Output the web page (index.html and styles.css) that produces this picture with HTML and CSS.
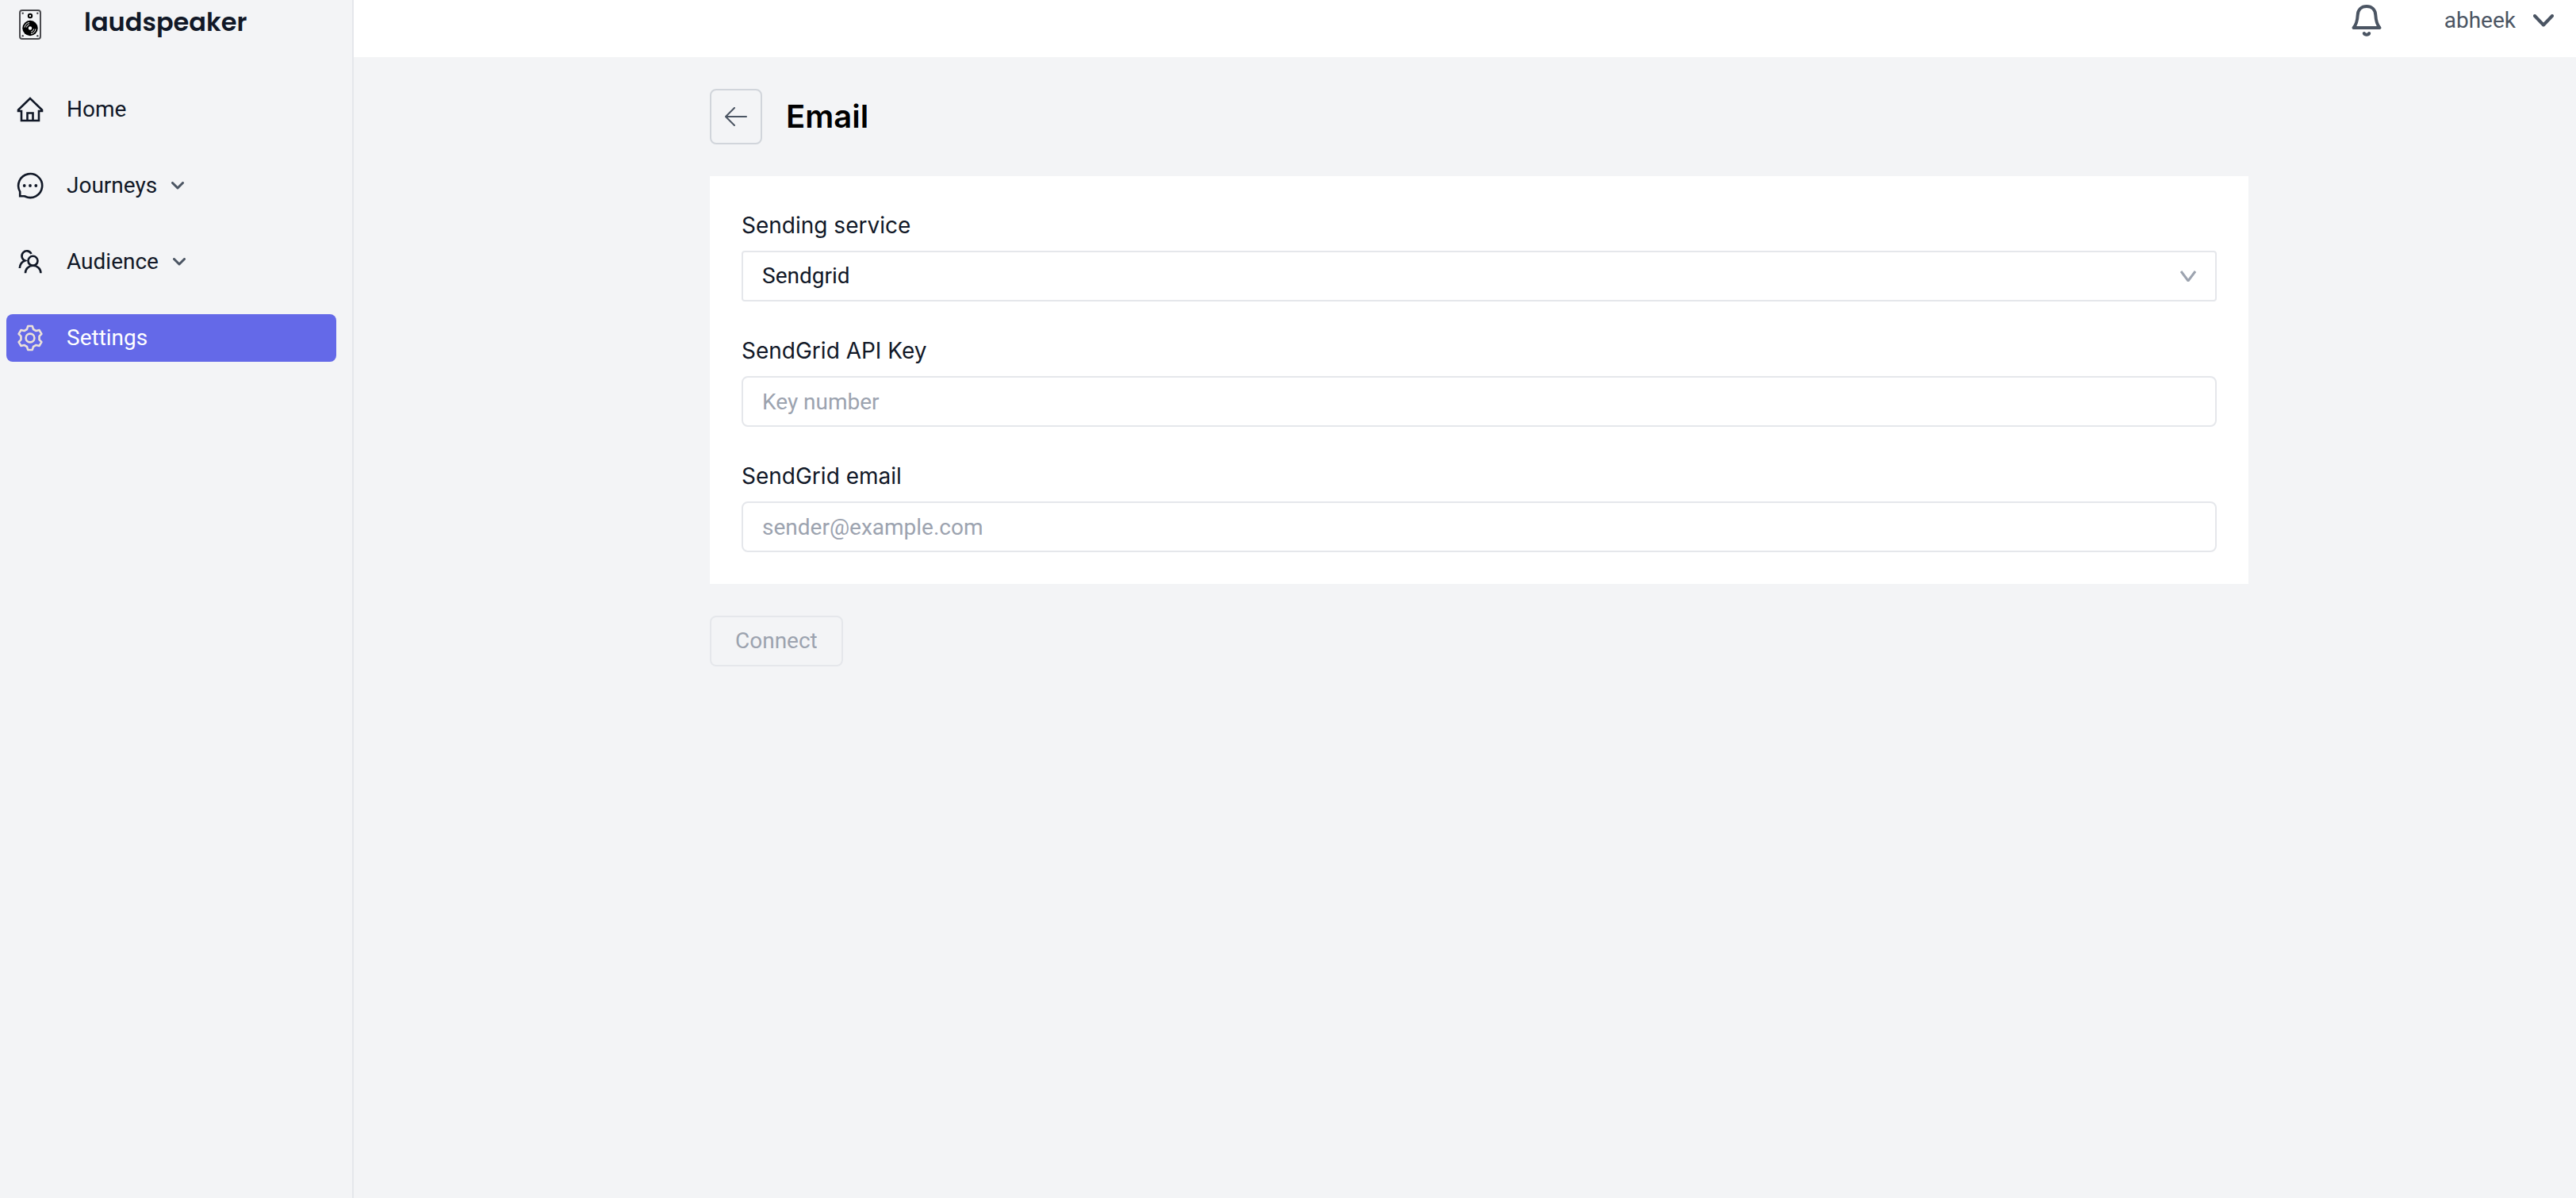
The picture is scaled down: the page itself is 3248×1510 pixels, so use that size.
FILE: index.html
```html
<!DOCTYPE html>
<html lang="en">
<head>
<meta charset="utf-8">
<meta name="viewport" content="width=device-width, initial-scale=1">
<title>Email settings - laudspeaker</title>
<link rel="stylesheet" href="styles.css">
</head>
<body>
<div class="app">
  <aside class="sidebar">
    <div class="brand">
      <svg class="brand-icon" viewBox="0 0 28 38" aria-hidden="true">
        <rect x="1" y="1" width="26" height="36" rx="3" fill="#f3f4f6" stroke="#4a4a4e" stroke-width="2"/>
        <g fill="#4a4a4e"><circle cx="4.700" cy="4.700" r="1.200"/><circle cx="23.300" cy="4.700" r="1.200"/><circle cx="4.700" cy="33.300" r="1.200"/><circle cx="23.300" cy="33.300" r="1.200"/></g>
        <circle cx="14" cy="8" r="2.200" fill="#fff" stroke="#000" stroke-width="2"/>
        <circle cx="14" cy="23.500" r="9.700" fill="#000"/>
        <circle cx="14" cy="23.500" r="2.200" fill="#fff"/>
        <g fill="none" stroke="#fff" stroke-width="1"><path d="M7 22.500a7 7 0 0 1 6-6M9.300 22.500a5 5 0 0 1 3.500-3.800M21 24.500a7 7 0 0 1-6 6M18.700 24.500a5 5 0 0 1-3.500 3.800"/></g>
      </svg>
      <span class="brand-name">laudspeaker</span>
    </div>
    <nav class="nav" aria-label="Main">
      <a class="nav-item" href="#home">
        <svg class="nav-icon" viewBox="0 0 36 36" aria-hidden="true"><path d="M18 4 3 18.500V20h4v12h22V20h4v-1.500ZM14.500 32V22.500h7V32"/></svg>
        <span>Home</span>
      </a>
      <a class="nav-item" href="#journeys">
        <svg class="nav-icon" viewBox="0 0 36 36" aria-hidden="true"><path d="M5.200 31.200V25.600A15 15 0 1 1 11.500 31.500L10.500 31.200Z"/><g fill="currentColor" stroke="none"><circle cx="10.700" cy="18" r="1.900"/><circle cx="18" cy="18" r="1.900"/><circle cx="25.300" cy="18" r="1.900"/></g></svg>
        <span>Journeys</span>
        <svg class="nav-chevron" viewBox="0 0 16 10" aria-hidden="true"><path d="m1.500 1.500 6.500 6.500 6.500-6.500"/></svg>
      </a>
      <a class="nav-item" href="#audience">
        <svg class="nav-icon" viewBox="0 0 36 36" aria-hidden="true"><circle cx="21.500" cy="16.800" r="6"/><path d="M12 32.300V32a9.700 9.200 0 0 1 19.400 0v.3M19.500 8A6.300 6.300 0 1 0 11.500 16.500C7.500 18 5 21.500 4.800 26"/></svg>
        <span>Audience</span>
        <svg class="nav-chevron" viewBox="0 0 16 10" aria-hidden="true"><path d="m1.500 1.500 6.500 6.500 6.500-6.500"/></svg>
      </a>
      <a class="nav-item nav-item-active" href="#settings" aria-current="page">
        <svg class="nav-icon" viewBox="-18 -18 36 36" aria-hidden="true"><path d="M-4-11-2.800-15H2.800L4-11 7.530-8.960 11.590-9.920 14.390-5.080 11.530-2.040V2.040L14.390 5.080 11.590 9.920 7.530 8.960 4 11 2.800 15H-2.800L-4 11-7.530 8.960-11.590 9.920-14.390 5.080-11.530 2.040V-2.040L-14.390-5.080-11.590-9.920-7.530-8.960Z"/><circle r="5.400"/></svg>
        <span>Settings</span>
      </a>
    </nav>
  </aside>

  <div class="page">
    <header class="topbar">
      <button class="icon-button" type="button" aria-label="Notifications">
        <svg class="bell" viewBox="0 0 40 40" aria-hidden="true"><path d="M3.500 29C7 25 8.300 20 8.700 13 9 6 13.500 2 20 2S31 6 31.300 13C31.700 20 33 25 36.500 29Z"/><path d="M16.800 36a3.400 2.500 0 0 0 6.400 0"/></svg>
      </button>
      <button class="account" type="button">
        <span>abheek</span>
        <svg class="account-chevron" viewBox="0 0 26 16" aria-hidden="true"><path d="M2 2 13 13.500 24 2"/></svg>
      </button>
    </header>

    <main class="main">
      <div class="content">
        <div class="heading">
          <button class="back" type="button" aria-label="Back">
            <svg class="back-icon" viewBox="0 0 28 24" aria-hidden="true"><path d="M27 12H1M12 1 1 12l11 11"/></svg>
          </button>
          <h1 class="title">Email</h1>
        </div>
        <form class="form">
          <div class="card">
            <div class="field">
              <label class="label" for="service">Sending service</label>
              <div class="select-wrap">
                <select class="control select" id="service"><option>Sendgrid</option></select>
                <svg class="select-arrow" viewBox="0 0 20 14" aria-hidden="true"><path d="m1 1 9 12 9-12"/></svg>
              </div>
            </div>
            <div class="field">
              <label class="label" for="api-key">SendGrid API Key</label>
              <input class="control" id="api-key" type="text" placeholder="Key number">
            </div>
            <div class="field">
              <label class="label" for="sender">SendGrid email</label>
              <input class="control" id="sender" type="email" placeholder="sender@example.com">
            </div>
          </div>
          <button class="connect" type="submit" disabled>Connect</button>
        </form>
      </div>
    </main>
  </div>
</div>
</body>
</html>
```

FILE: styles.css
```css
*, *::before, *::after {
  box-sizing: border-box;
}

body {
  margin: 0;
  background: #f3f4f6;
  color: #111827;
  font: 28px/40px Roboto, "Liberation Sans", sans-serif;
}

button, input, select {
  margin: 0;
  font: inherit;
  color: inherit;
}

button {
  padding: 0;
  border: 0;
  background: none;
}

svg {
  display: block;
  flex: none;
  fill: none;
  stroke: currentColor;
}

.app {
  display: flex;
  min-height: 100vh;
}

/* Sidebar */
.sidebar {
  flex: none;
  width: 446px;
  border-right: 2px solid #e5e7eb;
}

.brand {
  display: flex;
  gap: 54px;
  min-height: 108px;
  padding: 12px 24px 0;
}

.brand-icon {
  width: 28px;
  height: 38px;
  stroke: none;
}

.brand-name {
  font: 600 32px/32px Poppins, Inter, sans-serif;
}

.nav {
  display: grid;
  gap: 36px;
  padding: 0 20px 0 8px;
}

.nav-item {
  display: flex;
  align-items: center;
  height: 60px;
  padding: 0 12px;
  border-radius: 8px;
  color: inherit;
  text-decoration: none;
}

.nav-item-active {
  background: #6469e8;
  color: #fff;
}

.nav-icon {
  width: 36px;
  height: 36px;
  margin-right: 28px;
  stroke-width: 2.6;
}

.nav-item-active .nav-icon {
  color: #ebe1d8;
  stroke-linejoin: round;
}

.nav-chevron {
  width: 16px;
  height: 10px;
  margin-left: 18px;
  color: #4b5563;
  stroke-width: 3;
  stroke-linecap: round;
  stroke-linejoin: round;
}

/* Top bar */
.page {
  flex: 1;
  min-width: 0;
}

.topbar {
  display: flex;
  align-items: center;
  justify-content: flex-end;
  gap: 78px;
  height: 72px;
  padding: 0 28px 20px;
  background: #fff;
  color: #4b5563;
}

.bell {
  width: 40px;
  height: 40px;
  stroke-width: 4;
  stroke-linecap: round;
  stroke-linejoin: round;
}

.account {
  display: flex;
  align-items: center;
  gap: 22px;
}

.account-chevron {
  width: 26px;
  height: 16px;
  stroke-width: 4;
  stroke-linecap: round;
  stroke-linejoin: round;
}

/* Email settings */
.main {
  display: grid;
  grid-template-columns: 449fr 1940fr 413fr;
  padding: 40px 0;
}

.content {
  grid-column: 2;
  min-width: 0;
}

.heading {
  display: flex;
  align-items: center;
  gap: 30px;
  margin-bottom: 40px;
}

.back {
  display: grid;
  place-items: center;
  width: 66px;
  height: 70px;
  border: 2px solid #d1d5db;
  border-radius: 8px;
  color: #4b5563;
}

.back-icon {
  width: 28px;
  height: 24px;
  stroke-width: 2;
  stroke-linecap: round;
  stroke-linejoin: round;
}

.title {
  margin: 0;
  color: #000;
  font: 600 40px/56px Inter, sans-serif;
}

.card {
  display: grid;
  gap: 40px;
  margin-bottom: 40px;
  padding: 40px;
  background: #fff;
}

.field {
  display: grid;
  gap: 10px;
}

.label {
  font: 28px/44px Inter, sans-serif;
}

.control {
  display: block;
  width: 100%;
  height: 64px;
  padding: 0 24px;
  border: 2px solid #e5e7eb;
  border-radius: 8px;
  background: #fff;
}

.control::placeholder {
  color: #9ca3af;
  opacity: 1;
}

.select-wrap {
  position: relative;
}

.select {
  border-radius: 4px;
  appearance: none;
}

.select-arrow {
  position: absolute;
  top: 25px;
  right: 26px;
  width: 20px;
  height: 14px;
  color: #9ca3af;
  stroke-width: 3;
  pointer-events: none;
}

.connect {
  height: 64px;
  padding: 0 30px;
  border: 2px solid #e5e7eb;
  border-radius: 8px;
  color: #9ca3af;
}
```
